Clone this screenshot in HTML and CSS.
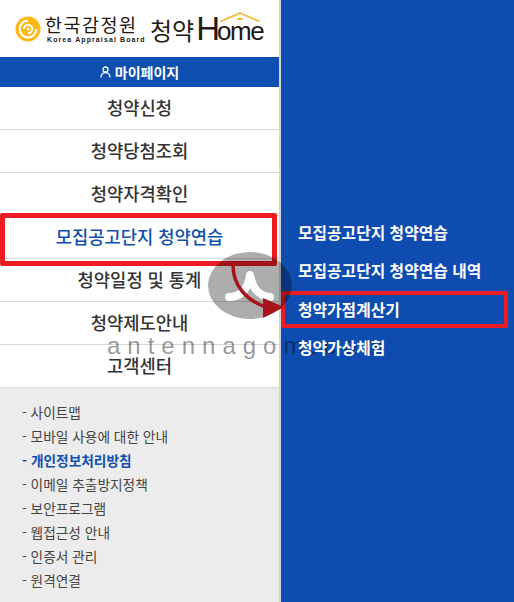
FILE: index.html
```html
<!DOCTYPE html>
<html lang="ko">
<head>
  <meta charset="UTF-8" />
  <meta name="viewport" content="width=device-width, initial-scale=1.0"/>
  <title>청약Home</title>
  <link rel="stylesheet" href="styles.css">
</head>
<body>

<div class="page">
  <div class="side">
    <div class="logo">
      <svg class="logo-mark" width="26" height="26" viewBox="0 0 28 28">
        <circle cx="14" cy="14" r="13.500" fill="#fdb813"/>
        <path d="M14 5a9 9 0 1 0 9 9" fill="none" stroke="#fff" stroke-width="2.200"/>
        <path d="M9.500 14a4.500 4.500 0 1 1 4.500 4.500" fill="none" stroke="#fff" stroke-width="2.200"/>
        <circle cx="14" cy="14" r="1.500" fill="#fff"/>
      </svg>
      <div class="logo-org">
        <div class="logo-kr">한국감정원</div>
        <div class="logo-en">Korea Appraisal Board</div>
      </div>
      <div class="logo-home">
        <span class="logo-sub">청약</span><span class="logo-h">H</span><span class="logo-ome">ome</span>
        <svg class="logo-roof" width="40" height="10" viewBox="0 0 40 10">
          <path d="M0.500 9.500 20 1 39.500 9.500" fill="none" stroke="#f2b01e" stroke-width="1.500"/>
          <rect x="17.500" y="6" width="5" height="2" fill="#f2b01e"/>
        </svg>
      </div>
    </div>

    <div class="mypage">
      <svg width="11" height="12" viewBox="0 0 11 12">
        <circle cx="5.500" cy="3.500" r="2.500" fill="none" stroke="#fff" stroke-width="1.300"/>
        <path d="M1 11.500c0-3 2-5 4.500-5s4.500 2 4.500 5" fill="none" stroke="#fff" stroke-width="1.300"/>
      </svg>
      마이페이지
    </div>

    <div class="menu">
      <div class="menu-item">청약신청</div>
      <div class="menu-item">청약당첨조회</div>
      <div class="menu-item">청약자격확인</div>
      <div class="menu-item active">모집공고단지 청약연습</div>
      <div class="menu-item">청약일정 및 통계</div>
      <div class="menu-item">청약제도안내</div>
      <div class="menu-item">고객센터</div>
    </div>

    <ul class="links">
      <li>- 사이트맵</li>
      <li>- 모바일 사용에 대한 안내</li>
      <li class="on">- 개인정보처리방침</li>
      <li>- 이메일 추출방지정책</li>
      <li>- 보안프로그램</li>
      <li>- 웹접근성 안내</li>
      <li>- 인증서 관리</li>
      <li>- 원격연결</li>
    </ul>
  </div>

  <div class="sub">
    <div class="sub-item">모집공고단지 청약연습</div>
    <div class="sub-item">모집공고단지 청약연습 내역</div>
    <div class="sub-item">청약가점계산기</div>
    <div class="sub-item">청약가상체험</div>
  </div>
</div>

<!-- annotations on top of the screenshot -->
<div class="mark mark-menu"></div>
<div class="mark mark-sub"></div>
<div class="stamp"></div>
<svg class="stamp-art" width="120" height="90" viewBox="0 0 120 90">
  <path d="M27 40c10 0 19-6 21-22 3 16 10 21 20 22" fill="none" stroke="#fff" stroke-width="8" stroke-linecap="round" stroke-linejoin="round"/>
  <path d="M31 5c-1 22 12 38 33 45" fill="none" stroke="#a8141c" stroke-width="3.500"/>
  <path d="M61 41 82 50 61 61z" fill="#a8141c"/>
</svg>
<div class="watermark">antennagom.com</div>

</body>
</html>
```

FILE: styles.css
```css
html, body {
  margin: 0;
  padding: 0;
  height: 100%;
}
body {
  font-family: "Noto Sans CJK KR", "Noto Sans", sans-serif;
  overflow: hidden;
  position: relative;
}
.page {
  display: flex;
  height: 602px;
}
.side {
  width: 279px;
  border-right: 2px solid #d4d4d4;
  background: #ececec;
  display: flex;
  flex-direction: column;
}
.logo {
  height: 57px;
  background: white;
  display: flex;
  align-items: center;
  padding-left: 15px;
  box-sizing: border-box;
}
.logo-mark {
  flex: none;
  margin-right: 4px;
}
.logo-org {
  width: 99px;
  color: #231815;
}
.logo-kr {
  font-size: 18.500px;
  line-height: 21px;
  letter-spacing: 1.500px;
}
.logo-en {
  font-family: "Liberation Sans", sans-serif;
  font-size: 7px;
  line-height: 9px;
  font-weight: bold;
  letter-spacing: 1.100px;
  padding-left: 2px;
  white-space: nowrap;
}
.logo-home {
  position: relative;
  color: #231815;
  display: flex;
  align-items: baseline;
  margin-left: 6px;
  font-family: "Liberation Sans", sans-serif;
}
.logo-sub {
  font-family: "Noto Sans CJK KR", sans-serif;
  font-size: 24px;
}
.logo-h {
  font-size: 33px;
  line-height: 38px;
  margin-left: 2px;
}
.logo-ome {
  font-size: 26px;
  letter-spacing: -1.500px;
  margin-left: -3px;
}
.logo-roof {
  position: absolute;
  right: 3px;
  top: 2px;
}
.mypage {
  height: 30px;
  background: #0e4fb0;
  color: white;
  font-size: 14px;
  font-weight: 700;
  display: flex;
  align-items: center;
  justify-content: center;
  gap: 4px;
}
.menu-item {
  height: 43px;
  box-sizing: border-box;
  background: white;
  border-bottom: 1px solid #d8d8d8;
  padding-bottom: 2px;
  color: #333;
  font-size: 17.700px;
  font-weight: 500;
  display: flex;
  align-items: center;
  justify-content: center;
}
.menu-item.active {
  color: #0e4fb0;
}
.links {
  list-style: none;
  margin: 0;
  padding: 12px 0 0 22px;
  font-size: 13.700px;
  color: #444;
}
.links li {
  height: 24px;
  line-height: 24px;
}
.links .on {
  color: #0e4fb0;
  font-weight: 700;
}
.sub {
  flex: 1;
  background: #0e4cb0;
  padding: 214px 0 0 17px;
}
.sub-item {
  position: relative;
  z-index: 1;
  height: 38.300px;
  line-height: 38px;
  color: white;
  font-size: 15.800px;
  font-weight: 700;
}
.mark {
  position: absolute;
  box-sizing: border-box;
  border: 4px solid #ed1c24;
  border-radius: 2px;
}
.mark-menu {
  left: 0;
  top: 213px;
  width: 277px;
  height: 53px;
  border-width: 5px;
}
.mark-sub {
  left: 281px;
  top: 291px;
  width: 227px;
  height: 37px;
}
.stamp {
  position: absolute;
  left: 208px;
  top: 252px;
  width: 84px;
  height: 67px;
  border-radius: 50%;
  background: rgba(0, 0, 0, 0.32);
}
.stamp-art {
  position: absolute;
  left: 202px;
  top: 257px;
}
.watermark {
  position: absolute;
  left: 107px;
  top: 333px;
  font-family: "Liberation Sans", sans-serif;
  font-size: 24px;
  line-height: 26px;
  letter-spacing: 7px;
  color: rgba(0, 0, 0, 0.42);
  white-space: nowrap;
}
```
